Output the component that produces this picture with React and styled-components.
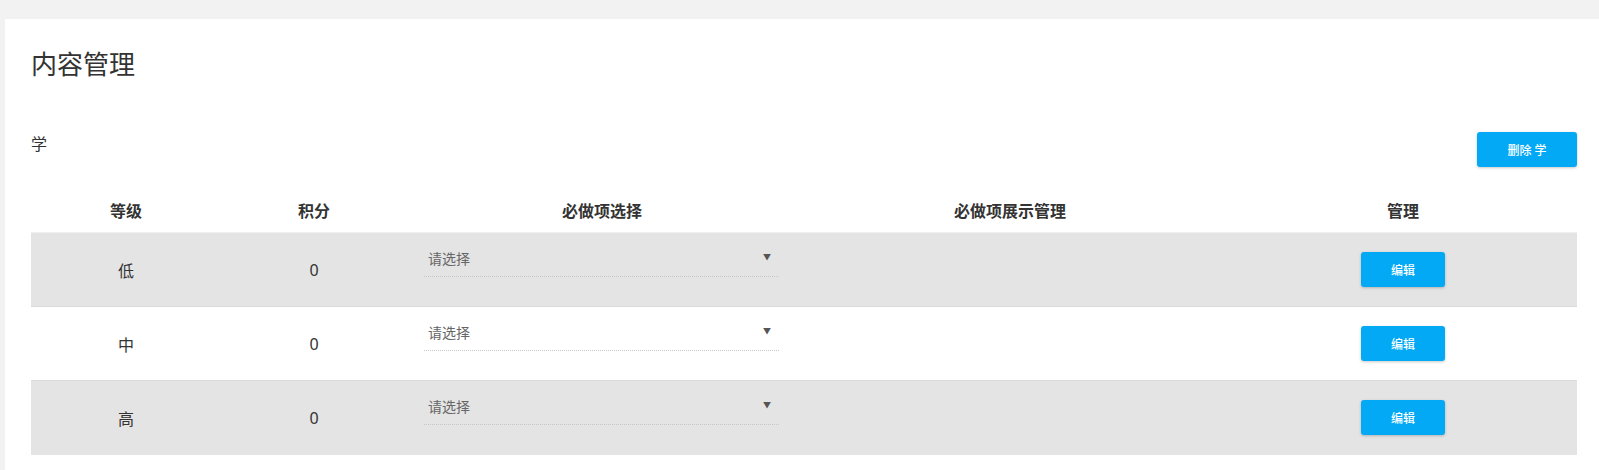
import React from 'react';
import styled, { createGlobalStyle } from 'styled-components';

const GlobalStyle = createGlobalStyle`
  html, body {
    margin: 0;
    padding: 0;
    background: #f2f2f2;
    font-family: "Noto Sans", "Noto Sans CJK SC", sans-serif;
    color: #333;
  }
`;

const Page = styled.div`
  padding: 19px 0 0 5px;
  min-height: 470px;
  box-sizing: border-box;
`;

const Card = styled.div`
  background: #fff;
  padding: 29px 22px 16px 26px;
  min-height: 451px;
  box-sizing: border-box;
`;

const Title = styled.h1`
  margin: 0;
  font-size: 26px;
  line-height: 32px;
  font-weight: 400;
  color: #333;
`;

const Section = styled.section`
  margin-top: 52px;
`;

const SectionHead = styled.div`
  display: flex;
  justify-content: space-between;
  align-items: flex-start;
`;

const SectionName = styled.span`
  font-size: 16px;
  line-height: 20px;
  padding-top: 2px;
`;

const Button = styled.button`
  width: ${p => p.$w || 84}px;
  height: 35px;
  border: none;
  border-radius: 3px;
  background: #03a9f4;
  color: #fff;
  font-family: inherit;
  font-size: 12px;
  font-weight: 500;
  box-shadow: 0 1px 3px rgba(0, 0, 0, 0.22);
  cursor: pointer;
  padding: 0;
`;

const Table = styled.table`
  width: 100%;
  margin-top: 21px;
  border-collapse: collapse;
  table-layout: fixed;
`;

const Th = styled.th`
  width: ${p => (p.$w ? `${p.$w}px` : 'auto')};
  height: 44px;
  font-size: 16px;
  font-weight: 700;
  color: #333;
  text-align: center;
  padding: 0 0 0 ${p => p.$shift || 0}px;
  border-bottom: 1px solid #f0f0f0;
`;

const Row = styled.tr`
  height: 74px;
  background: ${p => (p.$shade ? '#e4e4e4' : '#fff')};
  border-top: 1px solid #dadada;

  &:first-child {
    border-top: none;
  }
`;

const Td = styled.td`
  font-size: 16px;
  text-align: center;
  vertical-align: middle;
  padding: 0 0 0 ${p => p.$shift || 0}px;
`;

const SelectCell = styled.td`
  vertical-align: top;
  padding: 11px 18px 0 17px;
`;

const Select = styled.div`
  display: flex;
  align-items: center;
  justify-content: space-between;
  height: 28px;
  padding: 0 8px 4px 4px;
  border-bottom: 1px dotted #c8c8c8;
  font-size: 14px;
  color: #666;
  cursor: pointer;
`;

const Arrow = styled.span`
  font-size: 8px;
  color: #555;
  margin-top: -3px;
`;

const levels = ['低', '中', '高'];

export default function App() {
  return (
    <>
      <GlobalStyle />
      <Page>
        <Card>
          <Title>内容管理</Title>
          <Section>
            <SectionHead>
              <SectionName>学</SectionName>
              <Button $w={100}>删除 学</Button>
            </SectionHead>
            <Table>
              <thead>
                <tr>
                  <Th $w={190}>等级</Th>
                  <Th $w={186}>积分</Th>
                  <Th $w={390}>必做项选择</Th>
                  <Th $w={426}>必做项展示管理</Th>
                  <Th $shift={6}>管理</Th>
                </tr>
              </thead>
              <tbody>
                {levels.map((lv, i) => (
                  <Row key={lv} $shade={i % 2 === 0}>
                    <Td>{lv}</Td>
                    <Td>0</Td>
                    <SelectCell>
                      <Select>
                        <span>请选择</span>
                        <Arrow>▼</Arrow>
                      </Select>
                    </SelectCell>
                    <Td />
                    <Td $shift={6}>
                      <Button>编辑</Button>
                    </Td>
                  </Row>
                ))}
              </tbody>
            </Table>
          </Section>
        </Card>
      </Page>
    </>
  );
}
